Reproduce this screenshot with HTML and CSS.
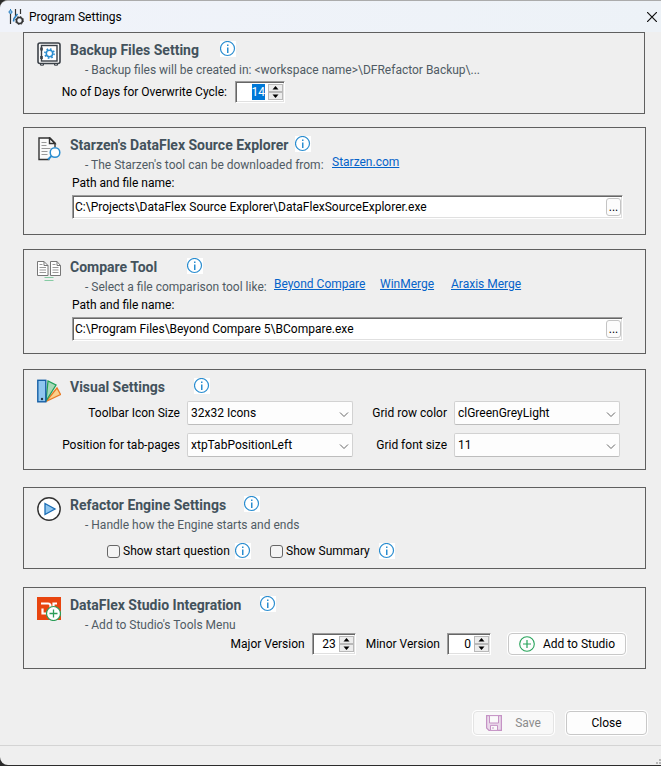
FILE: index.html
```html
<!DOCTYPE html>
<html lang="en">
<head>
<meta charset="utf-8">
<title>Program Settings</title>
<link rel="stylesheet" href="styles.css">
</head>
<body>
<svg class="defs" aria-hidden="true">
  <symbol id="info" viewBox="0 0 16 16">
    <circle cx="7.500" cy="7.500" r="7" fill="none" stroke="#2a8dd0" stroke-width="1.200"/>
    <rect x="7" y="3.500" width="1.500" height="1.500" fill="#2a8dd0"/>
    <rect x="7" y="6.500" width="1.500" height="5.500" fill="#2a8dd0"/>
  </symbol>
  <symbol id="up" viewBox="0 0 13 8"><path d="M6.5 2 9.5 5.5h-6z" fill="#000"/></symbol>
  <symbol id="down" viewBox="0 0 13 8"><path d="M6.5 6 3.500 2.500h6z" fill="#000"/></symbol>
</svg>
<div class="window">
  <header class="titlebar">
    <svg class="app-icon" viewBox="0 0 16 16" fill="none" stroke="#333" aria-hidden="true">
      <path d="M2.500 5v10M7.500 0v7M12.500 0v5" stroke-width="1.200"/>
      <path d="M2.500 0v1" stroke="#2a7fc0"/>
      <circle cx="2.500" cy="3" r="1.500" stroke="#2a7fc0" fill="#8ec4ea"/>
      <path d="M9.500 5 6 9.500l-.5 3" stroke="#2a7fc0" stroke-width="1.600"/>
      <circle cx="11.500" cy="11.500" r="3" stroke-width="1.600"/>
      <circle cx="11.500" cy="11.500" r="4" stroke-width="1" stroke-dasharray="1.600 1.540"/>
    </svg>
    <h1 class="caption">Program Settings</h1>
    <button class="close-x" aria-label="Close window"><svg viewBox="0 0 10 10"><path d="M0 0 10 10M10 0 0 10" stroke="#111" stroke-width="1.200"/></svg></button>
  </header>

  <main class="panels">
    <section class="panel panel-first">
      <svg class="panel-icon" viewBox="0 0 24 24" fill="none" stroke="#3b4148" aria-hidden="true">
        <rect x="1" y="1" width="22" height="20.500" rx="2" stroke-width="1.600" fill="#f6f6f6"/>
        <path d="M3.500 22v1.200h3V22M17.500 22v1.200h3V22" stroke-width="1"/>
        <rect x="4.500" y="3.500" width="15.500" height="15.500" stroke-width="1.400" fill="#fff"/>
        <path d="M4.500 5.500v3M4.500 14v3" stroke-width="2.600"/>
        <circle cx="12.500" cy="11.500" r="3.200" stroke="#2a8dd0" stroke-width="1.500"/>
        <circle cx="12.500" cy="11.500" r="4.600" stroke="#2a8dd0" stroke-width="1.600" stroke-dasharray="1.600 2.013"/>
      </svg>
      <div class="body">
        <div class="head"><h2 class="title-backup">Backup Files Setting</h2><svg class="info" role="img" aria-label="Info"><use href="#info"/></svg></div>
        <p class="sub">- Backup files will be created in: &lt;workspace name&gt;\DFRefactor Backup\...</p>
        <div class="cycle-row">
          <label class="cycle-label" for="days">No of Days for Overwrite Cycle:</label>
          <div class="spin spin-wide">
            <input id="days" type="text" inputmode="numeric" value="14">
            <div class="spin-buttons"><button aria-label="Increase"><svg><use href="#up"/></svg></button><button aria-label="Decrease"><svg><use href="#down"/></svg></button></div>
          </div>
        </div>
      </div>
    </section>

    <section class="panel panel-explorer">
      <svg class="panel-icon" viewBox="0 0 24 24" fill="none" aria-hidden="true">
        <path d="M12.500 22.500H2V1h11l5 5v4" stroke="#333" stroke-width="1.400" fill="#fafafa"/>
        <path d="M12.500 1v5.500H18z" stroke="#333" stroke-width="1.400"/>
        <path d="M4.500 5.500h5M4.500 8.500h5M4.500 11.500h9M4.500 14.500h6M4.500 17.500h6" stroke="#999"/>
        <circle cx="18" cy="15.500" r="4.800" stroke="#2a8dd0" stroke-width="1.500" fill="#fff"/>
        <path d="m14.500 19-3.500 3.500" stroke="#2a8dd0" stroke-width="1.800"/>
      </svg>
      <div class="body">
        <div class="head"><h2 class="title-explorer">Starzen's DataFlex Source Explorer</h2><svg class="info" role="img" aria-label="Info"><use href="#info"/></svg></div>
        <div class="sub-row"><p class="sub sub-explorer">- The Starzen's tool can be downloaded from:</p><a href="#">Starzen.com</a></div>
        <label class="path-label" for="path1">Path and file name:</label>
        <div class="path"><input id="path1" type="text" value="C:\Projects\DataFlex Source Explorer\DataFlexSourceExplorer.exe"><button aria-label="Browse">...</button></div>
      </div>
    </section>

    <section class="panel panel-compare">
      <svg class="panel-icon" viewBox="0 0 24 24" fill="none" aria-hidden="true">
        <g stroke="#777"><path d="M.5 2.500h6.500l4 4v10H.5zM13.500 2.500H20l3.500 4v10h-10z" fill="#fff"/>
        <path d="M7 2.500v4h4M20 2.500v4h3.500"/>
        <path d="M2.500 5.500h3M2.500 8.500h6.500M2.500 11h6.500M2.500 13.500h6.500M15.500 5.500h3M15.500 8.500h6M15.500 11h6M15.500 13.500h6" stroke="#999"/></g>
        <path d="M7.500 18.500h9M7.500 21.500h9" stroke="#86cba4" stroke-width="1.200"/>
      </svg>
      <div class="body">
        <div class="head"><h2 class="title-compare">Compare Tool</h2><svg class="info" role="img" aria-label="Info"><use href="#info"/></svg></div>
        <div class="sub-row"><p class="sub sub-compare">- Select a file comparison tool like:</p><a class="link-beyond" href="#">Beyond Compare</a><a class="link-winmerge" href="#">WinMerge</a><a href="#">Araxis Merge</a></div>
        <label class="path-label" for="path2">Path and file name:</label>
        <div class="path"><input id="path2" type="text" value="C:\Program Files\Beyond Compare 5\BCompare.exe"><button aria-label="Browse">...</button></div>
      </div>
    </section>

    <section class="panel panel-visual">
      <svg class="panel-icon" viewBox="0 0 24 24" aria-hidden="true">
        <path d="M9 22.500 20 9l3.500 6.500z" fill="#fbd08c" stroke="#e87a24" stroke-width="1.300"/>
        <path d="M9 22 11 2l8 4z" fill="#a9d9b8" stroke="#21a05a" stroke-width="1.300"/>
        <rect x=".8" y="1.300" width="8" height="21.500" fill="#8fc6ef" stroke="#165fa5" stroke-width="1.400"/>
        <circle cx="5" cy="20" r="1.200" fill="#234"/>
      </svg>
      <div class="body">
        <div class="head"><h2 class="title-visual">Visual Settings</h2><svg class="info" role="img" aria-label="Info"><use href="#info"/></svg></div>
        <div class="choices">
          <label for="iconsize">Toolbar Icon Size</label><select id="iconsize"><option>32x32 Icons</option></select>
          <label for="rowcolor">Grid row color</label><select id="rowcolor"><option>clGreenGreyLight</option></select>
          <label for="tabpos">Position for tab-pages</label><select id="tabpos"><option>xtpTabPositionLeft</option></select>
          <label for="fontsize">Grid font size</label><select id="fontsize"><option>11</option></select>
        </div>
      </div>
    </section>

    <section class="panel panel-engine">
      <svg class="panel-icon" viewBox="0 0 24 24" aria-hidden="true">
        <circle cx="12" cy="12" r="11.200" fill="#fff" stroke="#333" stroke-width="1.400"/>
        <path d="M8 6.500v11l10-5.500z" fill="#8fc6ef" stroke="#1b6db5" stroke-width="1.300"/>
      </svg>
      <div class="body">
        <div class="head"><h2 class="title-engine">Refactor Engine Settings</h2><svg class="info" role="img" aria-label="Info"><use href="#info"/></svg></div>
        <p class="sub">- Handle how the Engine starts and ends</p>
        <div class="checks">
          <label class="check check-start"><input type="checkbox">Show start question</label><svg class="info" role="img" aria-label="Info"><use href="#info"/></svg>
          <label class="check check-summary"><input type="checkbox">Show Summary</label><svg class="info" role="img" aria-label="Info"><use href="#info"/></svg>
        </div>
      </div>
    </section>

    <section class="panel panel-studio">
      <svg class="panel-icon" viewBox="0 0 24 24" fill="none" aria-hidden="true">
        <rect y="0" width="24" height="23" fill="#e8450f"/>
        <path d="M4 6.500h7q2.500 0 2.500 2.500v7.500H5.500v-5" stroke="#fff" stroke-width="2.200"/>
        <path d="M20 6.500h-3.500v6" stroke="#fff" stroke-width="2.200"/>
        <circle cx="16.500" cy="16.500" r="7" fill="#fff" stroke="#2b9d58" stroke-width="1.200"/>
        <path d="M12.500 16.500h8M16.500 12.500v8" stroke="#2b9d58" stroke-width="1.300"/>
      </svg>
      <div class="body">
        <div class="head"><h2 class="title-studio">DataFlex Studio Integration</h2><svg class="info" role="img" aria-label="Info"><use href="#info"/></svg></div>
        <p class="sub">- Add to Studio's Tools Menu</p>
        <div class="version-row">
          <label for="major">Major Version</label>
          <div class="spin"><input id="major" type="text" inputmode="numeric" value="23"><div class="spin-buttons"><button aria-label="Increase"><svg><use href="#up"/></svg></button><button aria-label="Decrease"><svg><use href="#down"/></svg></button></div></div>
          <label class="minor" for="minor">Minor Version</label>
          <div class="spin"><input id="minor" type="text" inputmode="numeric" value="0"><div class="spin-buttons"><button aria-label="Increase"><svg><use href="#up"/></svg></button><button aria-label="Decrease"><svg><use href="#down"/></svg></button></div></div>
          <button class="btn btn-add"><svg viewBox="0 0 16 16" fill="none" stroke="#27a35a"><circle cx="8" cy="8" r="7.300" stroke-width="1.100"/><path d="M4 8h8M8 4v8" stroke-width="1.200"/></svg>Add to Studio</button>
        </div>
      </div>
    </section>
  </main>

  <div class="actions">
    <button class="btn btn-save" disabled><svg viewBox="0 0 16 16" fill="#ead9ea" stroke="#c593c5"><path d="M.6.600h14.800v14.800H3L.6 13z" stroke-width="1.200"/><path d="M3.500.600h9v7.400h-9z" fill="#fafafa"/><path d="M4.500 15.400v-5h7v5z" fill="#fafafa"/><path d="M7 12v2" /></svg>Save</button>
    <button class="btn btn-close">Close</button>
  </div>
  <footer class="statusbar"><svg viewBox="0 0 5 5" fill="#b8b8b8"><path d="M3 0h2v2H3zM0 3h2v2H0zM3 3h2v2H3z"/></svg></footer>
</div>
<script src="script.js"></script>
</body>
</html>
```
FILE: script.js
```js
document.getElementById('days').select();

document.querySelectorAll('.spin').forEach(function (spin) {
  var input = spin.querySelector('input');
  var buttons = spin.querySelectorAll('button');
  buttons[0].addEventListener('click', function () { input.value = Number(input.value) + 1; });
  buttons[1].addEventListener('click', function () { input.value = Math.max(0, Number(input.value) - 1); });
});
```
FILE: styles.css
```css
* { box-sizing: border-box; }
body { margin: 0; background: #2b2b2b; color: #000; font: 12px/16px Roboto, "Open Sans", sans-serif; }
h1, h2, p { margin: 0; font: inherit; }
input, select, button { font: inherit; color: inherit; margin: 0; }
button { padding: 0; }
.defs { display: none; }

.window { min-height: calc(100vh - 1px); display: flex; flex-direction: column; background: #efefef; border-top: 1px solid #ababab; border-radius: 8px 0 0 8px; overflow: hidden; }
.titlebar { height: 31px; display: flex; align-items: center; padding: 0 4px 0 8px; background: linear-gradient(90deg, #f0f3fa, #edf2f7); }
.app-icon { width: 16px; height: 16px; }
.caption { margin-left: 5px; flex: 1; }
.close-x { width: 10px; height: 10px; border: 0; background: none; display: flex; }
.close-x svg { width: 10px; height: 10px; }

.panels { padding: 0 15px 0 23px; }
.panel { display: flex; gap: 9px; border: 1px solid #5f5f5f; padding: 7px 22px 0 13px; min-height: 82px; }
.panel-first { margin-right: 1px; }
.panel-icon { flex: none; width: 24px; height: 24px; margin-top: 2px; }
.body { flex: 1; min-width: 0; }
.panel-explorer { margin-top: 13px; min-height: 108px; }
.panel-compare { margin-top: 14px; min-height: 105px; }
.panel-visual { margin-top: 15px; min-height: 101px; }
.panel-engine { margin-top: 17px; }
.panel-studio { margin-top: 18px; }

.head { display: flex; height: 20px; align-items: center; }
.head h2 { font-size: 14px; font-weight: 700; line-height: 20px; color: #43525c; white-space: nowrap; }
.info { width: 16px; height: 16px; flex: none; background: #fff; }
.head .info { margin-bottom: 3px; }
.title-backup { width: 150px; }
.title-explorer { width: 225px; }
.title-compare { width: 117px; }
.title-visual { width: 124px; }
.title-engine { width: 174px; }
.title-studio { width: 190px; }

.sub { height: 20px; line-height: 20px; padding-left: 15px; color: #4f5b64; white-space: nowrap; }
.sub-row { display: flex; }
.sub-explorer { width: 262px; }
.sub-compare { width: 204px; }
a { color: #0563c9; line-height: 14px; white-space: nowrap; }
.link-beyond { width: 106px; }
.link-winmerge { width: 71px; }
.path-label { display: block; padding-left: 2px; }
.path { display: flex; height: 24px; margin: 4px 0 0 2px; padding: 1px 0 1px 1px; background: #fff; border: 1px solid #fff; border-top-color: #9c9c9c; border-left-color: #9c9c9c; box-shadow: inset 1px 1px #666, inset -1px -1px #e0e0e0; }
.path input { flex: 1; min-width: 0; border: 0; padding: 0 1px; background: none; outline: 0; }
.path button { width: 15px; margin: 1px; border: 1px solid #c4c4c4; border-radius: 3px; background: #fcfcfc; line-height: 12px; }

.cycle-row { display: flex; align-items: center; height: 24px; }
.cycle-label { width: 172px; text-align: right; margin-left: -15px; white-space: nowrap; }
.spin { display: flex; width: 44px; height: 22px; padding: 2px 1px 2px 2px; background: #fff; border: 1px solid #fff; border-top-color: #9c9c9c; border-left-color: #9c9c9c; box-shadow: inset 1px 1px #666, inset -1px -1px #e0e0e0; }
.spin-wide { width: 50px; margin-left: 8px; }
.spin input { flex: 1; min-width: 0; border: 0; padding: 0 3px; text-align: right; background: none; outline: 0; }
.spin input::selection { background: #0078d7; color: #fff; }
.spin-buttons { width: 15px; display: flex; flex-direction: column; }
.spin-buttons button { flex: 1; min-height: 0; border: 1px solid #b9b9b9; background: #ececec; display: flex; }
.spin-buttons svg { width: 13px; height: 8px; margin-top: -1px; }

.choices { display: grid; grid-template-columns: 119px minmax(0, 1fr) 87px minmax(0, 1fr); column-gap: 7px; row-gap: 8px; margin: 4px 3px 0 -9px; align-items: center; }
.choices label { text-align: right; white-space: nowrap; }
.choices select { appearance: none; height: 24px; width: 100%; padding: 0 3px; border: 1px solid #d2d2d2; border-bottom-color: #bdbdbd; border-radius: 2px; background: #fdfdfd url("data:image/svg+xml,%3Csvg xmlns='http://www.w3.org/2000/svg' width='10' height='6' fill='none' stroke='%23666'%3E%3Cpath d='M1 .5 5 4.500 9 .5'/%3E%3C/svg%3E") no-repeat right 3px top 10px; }

.checks { display: flex; align-items: center; height: 32px; padding-left: 37px; }
.check { display: flex; align-items: center; gap: 3px; white-space: nowrap; }
.check input { appearance: none; width: 13px; height: 13px; border: 1px solid #666; border-radius: 3px; background: #f4f4f4; }
.check-start { width: 128px; }
.check-summary { width: 109px; margin-left: 19px; }

.version-row { display: flex; align-items: center; justify-content: flex-end; height: 18px; white-space: nowrap; margin-right: -3px; }
.version-row .spin { margin-left: 7px; }
.minor { margin-left: 10px; }
.btn { display: flex; align-items: center; justify-content: center; border: 1px solid #c8c8c8; border-radius: 4px; background: #fdfdfd; box-shadow: 0 0 0 1px #fff; white-space: nowrap; }
.btn svg { width: 16px; height: 16px; }
.btn-add { width: 118px; height: 22px; margin-left: 17px; gap: 8px; }
.actions { display: flex; justify-content: flex-end; gap: 12px; padding: 42px 14px 10px; }
.actions .btn { width: 81px; height: 24px; }
.btn-save { gap: 13px; }
.actions .btn-save { background: #f8f8f8; border-color: #e4e4e4; color: #8b8b8b; }
.statusbar { flex: 1; border-top: 1px solid #d4d4d4; display: flex; justify-content: flex-end; align-items: flex-end; padding-bottom: 1px; }
.statusbar svg { width: 5px; height: 5px; }
```
